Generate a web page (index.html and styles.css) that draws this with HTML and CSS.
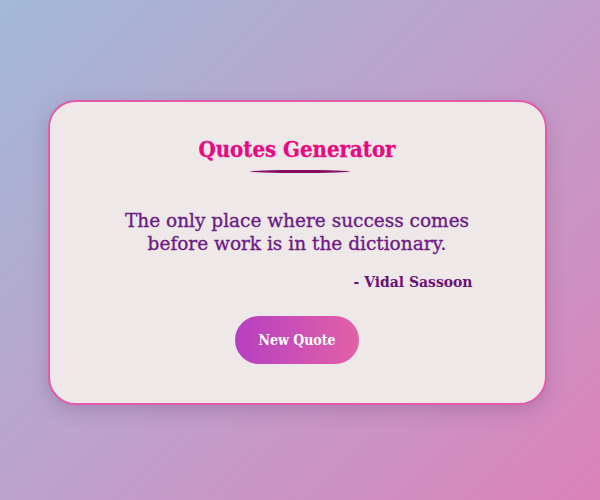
FILE: index.html
```html
<!DOCTYPE html>
<html>
<head>
<meta charset="utf-8">
<link rel="stylesheet" href="styles.css">
</head>
<body>
<div class="stage">
  <div class="card">
    <h1 class="title">Quotes Generator</h1>
    <div class="underline"></div>
    <p class="quote">The only place where success comes before work is in the dictionary.</p>
    <p class="author">- Vidal Sassoon</p>
    <div class="actions"><button class="btn">New Quote</button></div>
  </div>
</div>
</body>
</html>
```
FILE: styles.css
```css
html, body { margin: 0; padding: 0; }
body {
  width: 600px;
  height: 500px;
  background: linear-gradient(135deg, #a2b9d6 0%, #bca3cd 45%, #db82ba 100%);
  font-family: "DejaVu Serif", "Liberation Serif", serif;
  overflow: hidden;
}
.stage {
  height: 500px;
  display: flex;
  align-items: center;
  justify-content: center;
  padding-right: 6px;
  box-sizing: border-box;
}
.card {
  width: 499px;
  height: 305px;
  box-sizing: border-box;
  margin-top: 5px;
  background: #efe8e9;
  border: 2px solid #e35aa9;
  border-radius: 28px;
  box-shadow: 0 6px 18px rgba(90, 60, 110, 0.25);
  padding: 32px 70px 0;
  display: flex;
  flex-direction: column;
  align-items: center;
}
.title {
  margin: 0;
  font-family: "DejaVu Serif Condensed", "DejaVu Serif", serif;
  font-size: 22px;
  font-weight: bold;
  color: #e8087f;
  line-height: 30px;
  -webkit-text-stroke: 0.3px #e8087f;
}
.underline {
  width: 100px;
  height: 3px;
  margin-top: 6px;
  margin-left: 6px;
  background: #870a62;
  border-radius: 50%;
}
.quote {
  margin: 36px 0 0;
  font-size: 18.5px;
  line-height: 23px;
  color: #6c1b86;
  text-align: center;
  -webkit-text-stroke: 0.35px #6c1b86;
}
.author {
  align-self: stretch;
  margin: 17px 0 0;
  text-align: right;
  font-family: "DejaVu Serif Condensed", "DejaVu Serif", serif;
  font-size: 15.5px;
  font-weight: bold;
  color: #6c1075;
  padding-right: 2px;
}
.actions { margin-top: 25px; }
.btn {
  width: 124px;
  height: 48px;
  border: none;
  border-radius: 24px;
  background: linear-gradient(90deg, #b63fc2, #e261a6);
  color: #fff;
  font-family: "DejaVu Serif Condensed", "DejaVu Serif", serif;
  font-size: 14px;
  font-weight: bold;
}
```
